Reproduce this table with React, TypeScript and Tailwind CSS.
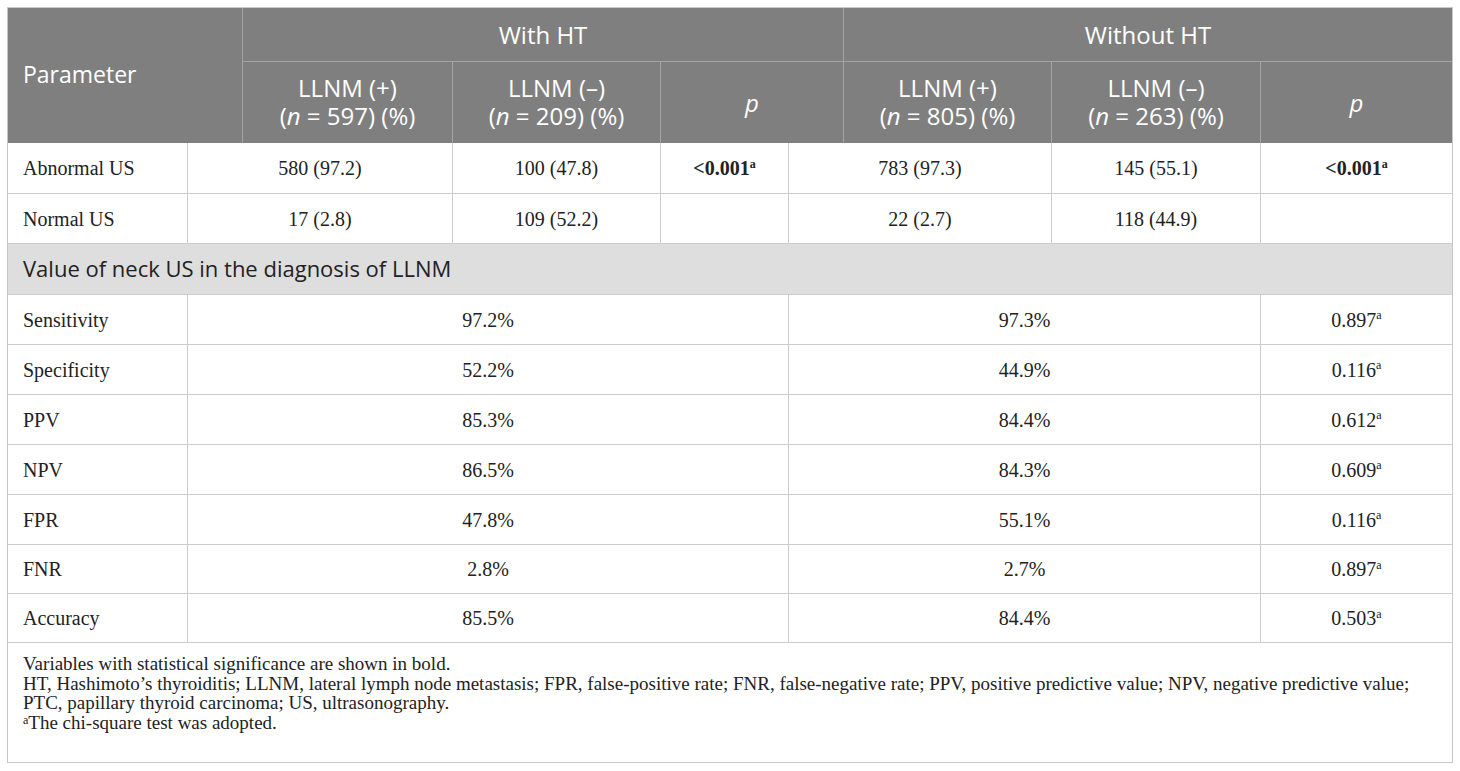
import React from "react";

const serif = { fontFamily: '"Liberation Serif", "Times New Roman", serif' };
const sans = { fontFamily: '"Open Sans", "Noto Sans", sans-serif' };

function Sup() {
  return <sup className="text-[12px] top-[-0.6em]">a</sup>;
}

const B = "border-[#cccccc]";

function Row({
  cells,
  widths,
  h = "h-[50px]",
  top = true,
}: {
  cells: React.ReactNode[];
  widths: string[];
  h?: string;
  top?: boolean;
}) {
  return (
    <div className={`flex ${h} ${top ? `border-t ${B}` : ""}`}>
      {cells.map((c, i) => (
        <div
          key={i}
          className={`${widths[i]} shrink-0 flex items-center ${
            i === 0 ? "justify-start pl-[15px]" : `justify-center border-l ${B}`
          }`}
        >
          {c}
        </div>
      ))}
    </div>
  );
}

const w7 = ["w-[179px]", "w-[265px]", "w-[208px]", "w-[128px]", "w-[263px]", "w-[209px]", "flex-1"];
const w4 = ["w-[179px]", "w-[601px]", "w-[472px]", "flex-1"];

const stats: [string, string, string, string, string][] = [
  ["Sensitivity", "97.2%", "97.3%", "0.897", "h-[50px]"],
  ["Specificity", "52.2%", "44.9%", "0.116", "h-[50px]"],
  ["PPV", "85.3%", "84.4%", "0.612", "h-[50px]"],
  ["NPV", "86.5%", "84.3%", "0.609", "h-[50px]"],
  ["FPR", "47.8%", "55.1%", "0.116", "h-[50px]"],
  ["FNR", "2.8%", "2.7%", "0.897", "h-[49px]"],
  ["Accuracy", "85.5%", "84.4%", "0.503", "h-[49px]"],
];

function HeadCell({ w, children, bl = true }: { w: string; children: React.ReactNode; bl?: boolean }) {
  return (
    <div
      className={`${w} shrink-0 flex items-center justify-center text-center leading-[28px] ${
        bl ? "border-l border-[#a3a3a3]" : ""
      }`}
    >
      {children}
    </div>
  );
}

function Two({ a, n }: { a: string; n: string }) {
  return (
    <p className="pb-[2px]">
      {a}
      <br />(<i>n</i> = {n}) (%)
    </p>
  );
}

export default function App() {
  return (
    <div className="w-[1460px] h-[771px] bg-white p-[7px]">
      <div className="w-[1446px] border border-[#c8c8c8] text-[#222]">
        {/* header */}
        <div className="flex bg-[#7f7f7f] text-white text-[24px]" style={sans}>
          <div className="w-[234px] shrink-0 flex items-center pl-[15px] pb-[2px] text-[23px]">Parameter</div>
          <div className="flex-1 flex flex-col border-l border-[#a3a3a3]">
            <div className="flex h-[54px] border-b border-[#a3a3a3]">
              <div className="w-[600px] shrink-0 flex items-center justify-center">With HT</div>
              <div className="flex-1 flex items-center justify-center border-l border-[#a3a3a3]">
                Without HT
              </div>
            </div>
            <div className="flex h-[81px]">
              <HeadCell w="w-[209px]" bl={false}>
                <Two a="LLNM (+)" n="597" />
              </HeadCell>
              <HeadCell w="w-[208px]">
                <Two a="LLNM (–)" n="209" />
              </HeadCell>
              <HeadCell w="w-[183px]">
                <i>p</i>
              </HeadCell>
              <HeadCell w="w-[208px]">
                <Two a="LLNM (+)" n="805" />
              </HeadCell>
              <HeadCell w="w-[209px]">
                <Two a="LLNM (–)" n="263" />
              </HeadCell>
              <HeadCell w="flex-1">
                <i>p</i>
              </HeadCell>
            </div>
          </div>
        </div>

        {/* body */}
        <div className="text-[20px]" style={serif}>
          <Row
            widths={w7}
            top={false}
            cells={[
              "Abnormal US",
              "580 (97.2)",
              "100 (47.8)",
              <b key="b">
                &lt;0.001
                <Sup />
              </b>,
              "783 (97.3)",
              "145 (55.1)",
              <b key="c">
                &lt;0.001
                <Sup />
              </b>,
            ]}
          />
          <Row
            widths={w7}
            cells={["Normal US", "17 (2.8)", "109 (52.2)", "", "22 (2.7)", "118 (44.9)", ""]}
          />
          <div
            className={`flex items-center h-[51px] border-t ${B} bg-[#dedede] pl-[15px] pb-[1px] text-[22px]`}
            style={sans}
          >
            Value of neck US in the diagnosis of LLNM
          </div>
          {stats.map((s) => (
            <Row
              key={s[0]}
              widths={w4}
              h={s[4]}
              cells={[
                s[0],
                s[1],
                s[2],
                <span key="p">
                  {s[3]}
                  <Sup />
                </span>,
              ]}
            />
          ))}
          <div className={`h-[120px] border-t ${B} pl-[15px] pr-[10px] pt-[11px] text-[19px] leading-[19.5px]`}>
            <p>Variables with statistical significance are shown in bold.</p>
            <p>
              HT, Hashimoto’s thyroiditis; LLNM, lateral lymph node metastasis; FPR, false-positive rate; FNR,
              false-negative rate; PPV, positive predictive value; NPV, negative predictive value; PTC, papillary
              thyroid carcinoma; US, ultrasonography.
            </p>
            <p>
              <sup className="text-[12px] top-[-0.4em]">a</sup>The chi-square test was adopted.
            </p>
          </div>
        </div>
      </div>
    </div>
  );
}
